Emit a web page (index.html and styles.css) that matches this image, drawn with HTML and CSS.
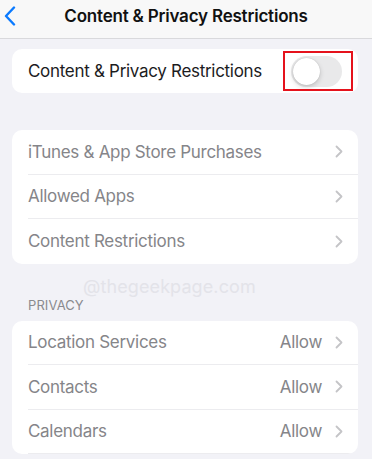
FILE: index.html
```html
<!DOCTYPE html>
<html>
<head>
<meta charset="utf-8">
<link rel="stylesheet" href="styles.css">
</head>
<body>
<header class="nav">
  <svg class="back" width="12" height="20" viewBox="0 0 12 20"><path d="M10 1.5 L2 10 L10 18.5" fill="none" stroke="#0a7aff" stroke-width="2.4" stroke-linecap="round" stroke-linejoin="round"/></svg>
  <h1 class="title">Content &amp; Privacy Restrictions</h1>
</header>
<main class="content">
  <section class="card first">
    <div class="row main-row">
      <span class="label dark">Content &amp; Privacy Restrictions</span>
      <span class="toggle"><span class="knob"></span><span class="highlight"></span></span>
    </div>
  </section>

  <section class="card">
    <div class="row"><span class="label">iTunes &amp; App Store Purchases</span><svg class="chev" width="8" height="13" viewBox="0 0 8 13"><path d="M1.5 1.5 L6.5 6.5 L1.5 11.5" fill="none" stroke="#c4c4c7" stroke-width="1.8" stroke-linecap="round" stroke-linejoin="round"/></svg></div>
    <div class="row"><span class="label">Allowed Apps</span><svg class="chev" width="8" height="13" viewBox="0 0 8 13"><path d="M1.5 1.5 L6.5 6.5 L1.5 11.5" fill="none" stroke="#c4c4c7" stroke-width="1.8" stroke-linecap="round" stroke-linejoin="round"/></svg></div>
    <div class="row last"><span class="label">Content Restrictions</span><svg class="chev" width="8" height="13" viewBox="0 0 8 13"><path d="M1.5 1.5 L6.5 6.5 L1.5 11.5" fill="none" stroke="#c4c4c7" stroke-width="1.8" stroke-linecap="round" stroke-linejoin="round"/></svg></div>
  </section>

  <div class="section">
    <div class="section-label">PRIVACY</div>
    <div class="watermark">@thegeekpage.com</div>
  </div>

  <section class="card">
    <div class="row"><span class="label">Location Services</span><span class="value">Allow</span><svg class="chev" width="8" height="13" viewBox="0 0 8 13"><path d="M1.5 1.5 L6.5 6.5 L1.5 11.5" fill="none" stroke="#c4c4c7" stroke-width="1.8" stroke-linecap="round" stroke-linejoin="round"/></svg></div>
    <div class="row"><span class="label">Contacts</span><span class="value">Allow</span><svg class="chev" width="8" height="13" viewBox="0 0 8 13"><path d="M1.5 1.5 L6.5 6.5 L1.5 11.5" fill="none" stroke="#c4c4c7" stroke-width="1.8" stroke-linecap="round" stroke-linejoin="round"/></svg></div>
    <div class="row"><span class="label">Calendars</span><span class="value">Allow</span><svg class="chev" width="8" height="13" viewBox="0 0 8 13"><path d="M1.5 1.5 L6.5 6.5 L1.5 11.5" fill="none" stroke="#c4c4c7" stroke-width="1.8" stroke-linecap="round" stroke-linejoin="round"/></svg></div>
  </section>
</main>
</body>
</html>
```

FILE: styles.css
```css
* { box-sizing: border-box; }
html, body { margin: 0; padding: 0; overflow: hidden; }
body {
  width: 372px;
  height: 459px;
  background: #f2f2f7;
  font-family: Inter, "Liberation Sans", sans-serif;
  -webkit-font-smoothing: antialiased;
}
.nav {
  height: 39px;
  background: #f8f8f8;
  border-bottom: 1px solid #d9d9dc;
  display: flex;
  align-items: center;
  justify-content: center;
  position: relative;
}
.back {
  position: absolute;
  left: 4px;
  top: 6px;
}
.title {
  margin: 0;
  margin-top: -6px;
  font-size: 17px;
  font-weight: 600;
  color: #111;
  letter-spacing: -0.2px;
}
.content {
  padding: 10px 14px 0 12px;
  display: flex;
  flex-direction: column;
}
.card {
  background: #fff;
  border-radius: 10px;
  overflow: hidden;
}
.card.first { margin-bottom: 37px; }
.row {
  height: 44.5px;
  margin-left: 16px;
  padding-right: 15px;
  display: flex;
  align-items: center;
  border-bottom: 1px solid #ececef;
}
.row.last, .main-row { border-bottom: none; }
.main-row { height: 44px; }
.label {
  flex: 1;
  font-size: 17px;
  color: #858589;
  letter-spacing: -0.3px;
}
.label.dark { color: #1c1c1e; }
.value {
  font-size: 17px;
  color: #858589;
  margin-right: 13px;
  letter-spacing: -0.3px;
}
.chev { display: block; flex: none; }
.toggle {
  position: relative;
  width: 51px;
  height: 31px;
  border-radius: 16px;
  background: #e9e9ea;
  display: block;
  margin-right: 1px;
}
.knob {
  position: absolute;
  left: 2px;
  top: 2px;
  width: 27px;
  height: 27px;
  border-radius: 50%;
  background: #fff;
  box-shadow: 0 2px 5px rgba(0,0,0,0.18), 0 0 1px rgba(0,0,0,0.2);
}
.highlight {
  position: absolute;
  left: -8px;
  right: -11px;
  top: -5px;
  bottom: -4px;
  border: 2px solid #e5121c;
}
.section {
  position: relative;
  height: 57px;
  padding: 33px 0 0 16px;
}
.section-label {
  font-size: 13px;
  line-height: 16px;
  color: #8a8a8e;
  letter-spacing: 0.1px;
}
.watermark {
  position: absolute;
  left: 71px;
  top: 12px;
  font-size: 18px;
  color: #e3e3e9;
  letter-spacing: 0.1px;
}
```
